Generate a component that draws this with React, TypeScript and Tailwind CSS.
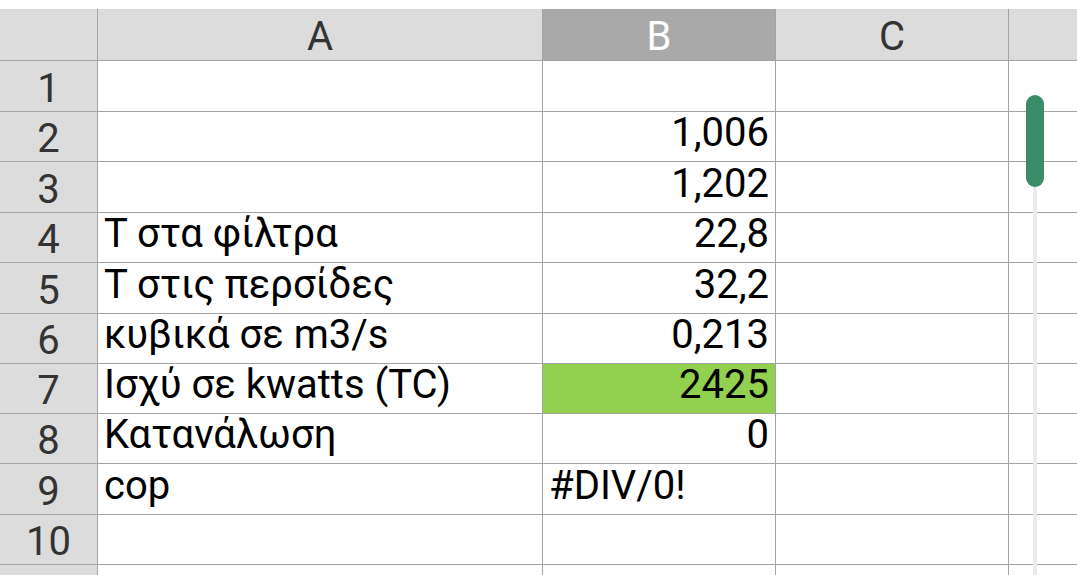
import React from 'react';

type Row = {
  n: number;
  h: string;
  a?: string;
  b?: string;
  bLeft?: boolean;
  green?: boolean;
};

const rows: Row[] = [
  { n: 1, h: 'h-[51px]' },
  { n: 2, h: 'h-[50px]', b: '1,006' },
  { n: 3, h: 'h-[51px]', b: '1,202' },
  { n: 4, h: 'h-[50px]', a: 'Τ στα φίλτρα', b: '22,8' },
  { n: 5, h: 'h-[51px]', a: 'Τ στις περσίδες', b: '32,2' },
  { n: 6, h: 'h-[50px]', a: 'κυβικά σε m3/s', b: '0,213' },
  { n: 7, h: 'h-[50px]', a: 'Ισχύ σε kwatts (TC)', b: '2425', green: true },
  { n: 8, h: 'h-[50px]', a: 'Κατανάλωση', b: '0' },
  { n: 9, h: 'h-[51px]', a: 'cop', b: '#DIV/0!', bLeft: true },
  { n: 10, h: 'h-[50px]' },
  { n: 11, h: 'h-[51px]' },
];

const line = 'border-[#a4a4a4]';

export default function App() {
  return (
    <div className="relative w-[1077px] h-[575px] overflow-hidden bg-white font-['Roboto',sans-serif]">
      <div className="h-[9px]" />

      {/* Column headers */}
      <div className={`flex h-[52px] border-b ${line} bg-[#dcdcdc] text-[40px] leading-none text-[#333]`}>
        <div className={`w-[98px] shrink-0 border-r ${line}`} />
        <div className={`w-[445px] shrink-0 border-r ${line} flex items-end justify-center pb-[3px]`}>A</div>
        <div className={`w-[233px] shrink-0 border-r ${line} bg-[#a9a9a9] text-white flex items-end justify-center pb-[3px]`}>B</div>
        <div className={`w-[233px] shrink-0 border-r ${line} flex items-end justify-center pb-[3px]`}>C</div>
        <div className="flex-1" />
      </div>

      {rows.map((r) => (
        <div key={r.n} className={`flex ${r.h} border-b ${line} text-[40px] leading-none`}>
          <div className={`w-[98px] shrink-0 border-r ${line} bg-[#dcdcdc] text-[#333] flex items-end justify-center pb-[2px]`}>
            {r.n < 11 ? r.n : null}
          </div>
          <div className={`w-[445px] shrink-0 border-r ${line} flex items-end pl-[6px] pb-[8px] text-black whitespace-nowrap`}>
            {r.a}
          </div>
          <div
            className={`w-[233px] shrink-0 border-r ${line} flex items-end pb-[8px] text-black whitespace-nowrap ${
              r.bLeft ? 'justify-start pl-[6px]' : 'justify-end pr-[6px]'
            } ${r.green ? 'bg-[#92d050]' : ''}`}
          >
            {r.b}
          </div>
          <div className={`w-[233px] shrink-0 border-r ${line}`} />
          <div className="flex-1" />
        </div>
      ))}

      {/* Scrollbar overlay */}
      <div className="absolute left-[1033px] top-[140px] bottom-0 w-[4px] bg-[#ebebeb]" />
      <div className="absolute left-[1026px] top-[95px] w-[18px] h-[92px] rounded-full bg-[#3a8c68]" />
    </div>
  );
}
